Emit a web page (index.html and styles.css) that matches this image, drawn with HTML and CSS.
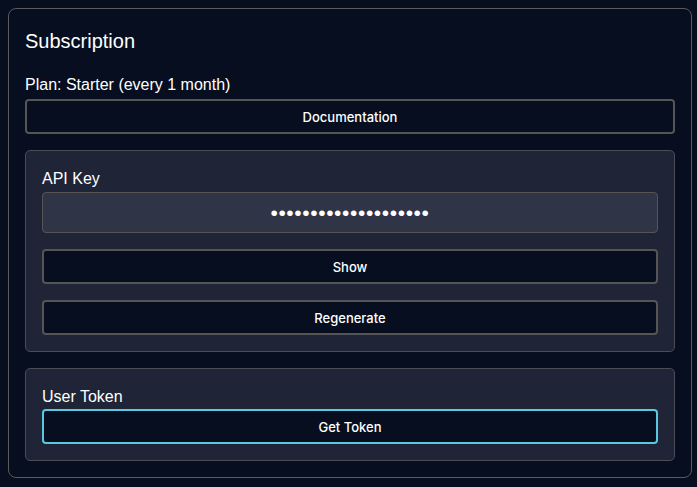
FILE: index.html
```html
<!DOCTYPE html>
<html lang="en">
<head>
<meta charset="utf-8">
<title>Subscription</title>
<link rel="stylesheet" href="styles.css">
</head>
<body>
<section class="card">
  <h2 class="title">Subscription</h2>
  <p class="plan">Plan: Starter (every 1 month)</p>
  <button class="btn btn-doc" type="button">Documentation</button>

  <div class="panel panel-api">
    <label class="label" for="apikey">API Key</label>
    <input class="key-input" id="apikey" type="password" value="abcdefghijklmnopqrst" readonly>
    <button class="btn btn-show" type="button">Show</button>
    <button class="btn btn-regen" type="button">Regenerate</button>
  </div>

  <div class="panel panel-token">
    <div class="label">User Token</div>
    <button class="btn btn-accent" type="button">Get Token</button>
  </div>
</section>
</body>
</html>
```

FILE: styles.css
```css
html, body {
  margin: 0;
  padding: 0;
  background: #060e1f;
}
body {
  padding: 8px;
  font-family: "Liberation Sans", Arial, sans-serif;
  color: #ffffff;
}
.card {
  box-sizing: border-box;
  width: 684px;
  border: 1px solid #5a5a5a;
  border-radius: 8px;
  background: #060e1f;
  padding: 16px;
  display: flex;
  flex-direction: column;
}
.title {
  margin: 0 0 16px 0;
  font-size: 20px;
  font-weight: 400;
  line-height: 32px;
}
.plan {
  margin: 0 0 2px 0;
  font-size: 16px;
  line-height: 24px;
}
.btn {
  box-sizing: border-box;
  display: block;
  width: 100%;
  height: 35px;
  margin: 0;
  padding: 0;
  border: 2px solid #555555;
  border-radius: 4px;
  background: #060e1f;
  color: #ffffff;
  font-family: Inter, "Noto Sans", sans-serif;
  font-size: 13px;
  font-weight: 500;
  cursor: pointer;
}
.btn-doc {
  margin-bottom: 16px;
}
.panel {
  box-sizing: border-box;
  border: 1px solid #4a4d57;
  border-radius: 5px;
  background: #1f2437;
  padding: 16px;
  display: flex;
  flex-direction: column;
}
.panel-api {
  margin-bottom: 16px;
}
.label {
  display: block;
  font-size: 16px;
  line-height: 24px;
}
.key-input {
  box-sizing: border-box;
  display: block;
  width: 100%;
  height: 41px;
  margin: 1px 0 16px 0;
  padding: 0 12px;
  border: 1px solid #555555;
  border-radius: 4px;
  background: #2f3447;
  color: #ffffff;
  text-align: center;
  font-family: "Liberation Sans", Arial, sans-serif;
  font-size: 21px;
  letter-spacing: 0.6px;
  outline: none;
}
.btn-show {
  margin-bottom: 16px;
}
.btn-accent {
  border-color: #5bc8e2;
}
```
